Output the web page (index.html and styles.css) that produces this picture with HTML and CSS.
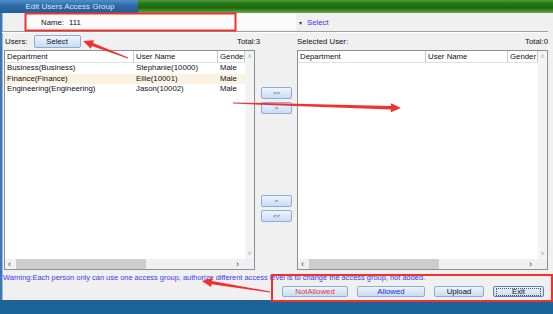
FILE: index.html
```html
<!DOCTYPE html>
<html>
<head>
<meta charset="utf-8">
<link rel="stylesheet" href="styles.css">
</head>
<body>
<div class="titlebar">
  <div class="title-blue">Edit Users Access Group</div>
  <div class="title-green"></div>
</div>
<div class="window">
  <div class="name-row">
    <div class="name-field">
      <span class="name-label">Name:</span>
      <span class="name-value">111</span>
    </div>
    <span class="caret">&#9662;</span>
    <span class="link">Select</span>
  </div>
  <div class="divider"></div>
  <div class="panels">
    <div class="phead left-head">
      <div class="phead-l"><span>Users:</span><button class="btn sel-btn">Select</button></div>
      <span>Total:3</span>
    </div>
    <div></div>
    <div class="phead">
      <span>Selected User:</span>
      <span>Total:0</span>
    </div>

    <div class="table">
      <div class="list">
        <div class="row head lcols">
          <div class="c">Department</div><div class="c">User Name</div><div class="c">Gender</div>
        </div>
        <div class="row lcols"><div class="c">Business(Business)</div><div class="c">Stephanie(10000)</div><div class="c">Male</div></div>
        <div class="row lcols hl"><div class="c">Finance(Finance)</div><div class="c">Ellie(10001)</div><div class="c">Male</div></div>
        <div class="row lcols"><div class="c">Engineering(Engineering)</div><div class="c">Jason(10002)</div><div class="c">Male</div></div>
      </div>
      <div class="vscroll"><span class="ar">&#708;</span><span class="ar">&#709;</span></div>
      <div class="hscroll"><span class="ar">&#8249;</span><div class="thumb"></div><span class="ar rt">&#8250;</span></div>
      <div class="corner"></div>
    </div>

    <div class="mid">
      <button class="btn mbtn first">&gt;&gt;</button>
      <button class="btn mbtn">&gt;</button>
      <button class="btn mbtn second">&lt;</button>
      <button class="btn mbtn">&lt;&lt;</button>
    </div>

    <div class="table">
      <div class="list">
        <div class="row head rcols">
          <div class="c">Department</div><div class="c">User Name</div><div class="c">Gender</div>
        </div>
      </div>
      <div class="vscroll"><span class="ar">&#708;</span><span class="ar">&#709;</span></div>
      <div class="hscroll"><span class="ar">&#8249;</span><div class="thumb"></div><span class="ar rt">&#8250;</span></div>
      <div class="corner"></div>
    </div>
  </div>
  <div class="warning">Warning:Each person only can use one access group, authorize different access level is to change the access group, not added.</div>
  <div class="actions">
    <button class="btn abtn notallowed">NotAllowed</button>
    <button class="btn abtn allowed">Allowed</button>
    <button class="btn abtn upload">Upload</button>
    <button class="btn abtn exit"><span class="focus">Exit</span></button>
  </div>
</div>
<div class="taskbar"></div>

<svg class="annot" width="553" height="314" viewBox="0 0 553 314">
  <rect x="25.5" y="13.5" width="210" height="17" fill="none" stroke="#f2302e" stroke-width="2"/>
  <rect x="272" y="275" width="280" height="26" fill="none" stroke="#f2302e" stroke-width="2"/>
  <g fill="#f2302e">
    <polygon transform="translate(128,58) rotate(200.7)" points="0,-0.5 38,-1.6 38,-4.5 48,0 38,4.5 38,1.6 0,0.5"/>
    <polygon transform="translate(233,103) rotate(1.7)" points="0,-0.6 158,-1.8 158,-4.5 168,0 158,4.5 158,1.8 0,0.6"/>
    <polygon transform="translate(270,292) rotate(189.2)" points="0,-0.5 59,-1.6 59,-4.5 69,0 59,4.5 59,1.6 0,0.5"/>
  </g>
</svg>
</body>
</html>
```

FILE: styles.css
```css
* { box-sizing: border-box; }
html, body { margin: 0; padding: 0; }
body {
  width: 553px;
  height: 314px;
  overflow: hidden;
  position: relative;
  font-family: "Liberation Sans", Arial, sans-serif;
  font-size: 7.8px;
  color: #111;
  background: #f0f0f0;
}
.titlebar { display: flex; height: 13px; }
.title-blue {
  width: 138px;
  background: linear-gradient(#4f8fcb, #2c6aa6 45%, #245f98);
  color: #d6e8f8;
  font-size: 8px;
  text-align: center;
  line-height: 13px;
  padding-left: 2px;
}
.title-green {
  flex: 1;
  background: linear-gradient(#4e9a3c, #2a7a1a 25%, #19680a 60%, #6bab52);
}
.window {
  height: 287px;
  border-left: 2px solid #3b78b8;
  box-shadow: inset 1px 0 0 #9bb8d4;
  display: flex;
  flex-direction: column;
}
.name-row { display: flex; align-items: center; height: 18px; }
.name-field {
  margin-left: 24px;
  width: 270px;
  height: 16px;
  background: #fbfbfb;
  display: flex;
  align-items: center;
}
.name-label { margin-left: 15px; width: 28px; }
.caret { font-size: 6px; margin-left: 3px; color: #333; }
.link { color: #3535f5; margin-left: 5px; }
.divider {
  width: 546px;
  height: 2px;
  border-top: 1px solid #a0a0a0;
  border-bottom: 1px solid #fff;
}
.panels {
  display: grid;
  grid-template-columns: 251px 42px 251px;
  grid-template-rows: 17px 220px;
  margin-left: 2px;
}
.phead { display: flex; justify-content: space-between; align-items: center; }
.left-head { margin-right: -5px; padding-left: 1px; }
.phead-l { display: flex; align-items: center; }
.btn {
  font-family: "Liberation Sans", Arial, sans-serif;
  font-size: 7.8px;
  color: #111;
  padding: 0;
  border: 1px solid #8eacd2;
  border-radius: 2px;
  background: linear-gradient(#f0f6fd, #dae8f9 50%, #c9dcf5);
  display: flex;
  align-items: center;
  justify-content: center;
}
.sel-btn { width: 47px; height: 13px; margin-left: 6px; }
.table {
  display: grid;
  grid-template-columns: 1fr 9px;
  grid-template-rows: 1fr 10px;
  border: 1px solid #8a8f96;
  background: #fff;
}
.list { background: #fff; overflow: hidden; }
.row { display: grid; height: 10.6px; line-height: 10.6px; }
.row.head { height: 12px; line-height: 12px; border-bottom: 1px solid #e0e0e0; }
.row.head .c { border-right: 1px solid #c9c9c9; }
.lcols { grid-template-columns: 129px 84px 1fr; }
.rcols { grid-template-columns: 128px 82px 1fr; }
.c { padding-left: 2px; white-space: nowrap; overflow: hidden; }
.hl { background: #fdf2e2; }
.vscroll {
  background: #f3f3f3;
  display: flex;
  flex-direction: column;
  justify-content: space-between;
  align-items: center;
}
.ar { color: #a8a8a8; font-size: 7px; line-height: 11px; }
.hscroll {
  background: #f0f0f0;
  display: flex;
  align-items: center;
  padding: 0 2px 0 3px;
}
.hscroll .ar { color: #333; font-size: 9px; line-height: 10px; width: 7px; }
.hscroll .thumb { width: 130px; height: 10px; background: #cdcdcd; margin-left: 1px; }
.hscroll .rt { margin-left: auto; }
.corner { background: #f0f0f0; }
.mid {
  display: flex;
  flex-direction: column;
  padding-left: 6px;
}
.mbtn { width: 31px; height: 12px; margin-top: 3px; font-size: 6px; color: #444; }
.mbtn.first { margin-top: 37px; }
.mbtn.second { margin-top: 81px; }
.warning {
  color: #3a3af0;
  font-size: 7.45px;
  padding-left: 1px;
  margin-top: 2px;
  height: 12px;
  line-height: 12px;
  white-space: nowrap;
}
.actions {
  display: flex;
  justify-content: flex-end;
  padding-right: 9px;
  margin-top: 2px;
  gap: 9px;
}
.abtn { height: 11px; }
.notallowed { width: 66px; color: #e5343a; }
.allowed { width: 68px; color: #2626d6; }
.upload { width: 50px; }
.exit { width: 51px; border-color: #5f7fa8; }
.exit .focus {
  display: flex;
  align-items: center;
  justify-content: center;
  width: 45px;
  height: 8px;
  border: 1px dotted #555;
}
.taskbar {
  height: 14px;
  background: linear-gradient(#2a5d86, #1b6498 20%, #19659c);
}
.annot { position: absolute; left: 0; top: 0; pointer-events: none; }
```
